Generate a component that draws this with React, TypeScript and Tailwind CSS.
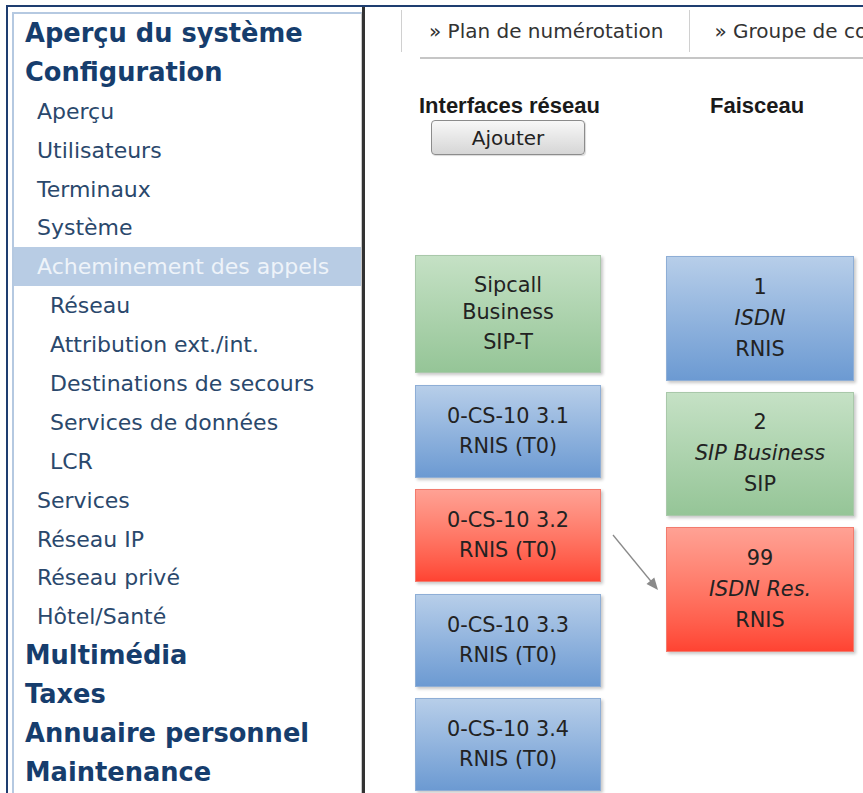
import React from 'react';

type NavItem = { label: string; level: 0 | 1 | 2; active?: boolean };

const navItems: NavItem[] = [
  { label: 'Aperçu du système', level: 0 },
  { label: 'Configuration', level: 0 },
  { label: 'Aperçu', level: 1 },
  { label: 'Utilisateurs', level: 1 },
  { label: 'Terminaux', level: 1 },
  { label: 'Système', level: 1 },
  { label: 'Acheminement des appels', level: 1, active: true },
  { label: 'Réseau', level: 2 },
  { label: 'Attribution ext./int.', level: 2 },
  { label: 'Destinations de secours', level: 2 },
  { label: 'Services de données', level: 2 },
  { label: 'LCR', level: 2 },
  { label: 'Services', level: 1 },
  { label: 'Réseau IP', level: 1 },
  { label: 'Réseau privé', level: 1 },
  { label: 'Hôtel/Santé', level: 1 },
  { label: 'Multimédia', level: 0 },
  { label: 'Taxes', level: 0 },
  { label: 'Annuaire personnel', level: 0 },
  { label: 'Maintenance', level: 0 },
];

type Tone = 'green' | 'blue' | 'red';

const toneClass: Record<Tone, string> = {
  green: 'bg-linear-to-b from-[#c5e1c5] to-[#95c597] border-[#a9c8aa]',
  blue: 'bg-linear-to-b from-[#b7cee9] to-[#6c9ad2] border-[#8eaed6]',
  red: 'bg-linear-to-b from-[#ffa194] to-[#ff4332] border-[#f27b6e]',
};

const interfaces: { tone: Tone; name: string[]; type: string; tall?: boolean }[] = [
  { tone: 'green', name: ['Sipcall', 'Business'], type: 'SIP-T', tall: true },
  { tone: 'blue', name: ['0-CS-10 3.1'], type: 'RNIS (T0)' },
  { tone: 'red', name: ['0-CS-10 3.2'], type: 'RNIS (T0)' },
  { tone: 'blue', name: ['0-CS-10 3.3'], type: 'RNIS (T0)' },
  { tone: 'blue', name: ['0-CS-10 3.4'], type: 'RNIS (T0)' },
];

const trunks: { tone: Tone; id: string; name: string; type: string }[] = [
  { tone: 'blue', id: '1', name: 'ISDN', type: 'RNIS' },
  { tone: 'green', id: '2', name: 'SIP Business', type: 'SIP' },
  { tone: 'red', id: '99', name: 'ISDN Res.', type: 'RNIS' },
];

const Sidebar: React.FC = () => (
  <div className="w-[359px] shrink-0 border-l-2 border-l-[#1e3d70] border-r-[3px] border-r-[#333333] pl-[4px] pt-[5px]">
    <div className="h-full border-l-2 border-t-2 border-r border-l-[#b5c9e1] border-t-[#b5c9e1] border-r-[#c9c9c9]">
      {navItems.map(item => {
        if (item.level === 0) {
          return (
            <div key={item.label} className="h-[38.9px] pl-[11px] flex items-center text-[25.7px] font-bold text-[#163d6d] whitespace-nowrap">
              {item.label}
            </div>
          );
        }
        return (
          <div
            key={item.label}
            className={`h-[38.9px] flex items-center text-[22px] whitespace-nowrap ${item.level === 2 ? 'pl-[36px]' : 'pl-[23px]'} ${item.active ? 'bg-[#b8cce4] text-[#eef3f9]' : 'text-[#2a486c]'}`}
          >
            {item.label}
          </div>
        );
      })}
    </div>
  </div>
);

const Box: React.FC<{ tone: Tone; className: string; children: React.ReactNode }> = ({ tone, className, children }) => (
  <div className={`border flex flex-col items-center justify-center text-[20.8px] text-[#222] whitespace-nowrap shadow-[2px_2px_3px_rgba(0,0,0,0.22)] ${toneClass[tone]} ${className}`}>
    {children}
  </div>
);

export default function App() {
  return (
    <div className="w-[863px] h-[793px] overflow-hidden bg-white pt-[5px] font-['DejaVu_Sans',Verdana,sans-serif]">
      <div className="ml-[6px] h-full border-t-2 border-[#1e3d70] flex">
        <Sidebar />

        <div className="relative flex-1 overflow-hidden">
          {/* tabs */}
          <div className="ml-[36px] mt-[3px] flex h-[42px] whitespace-nowrap text-[20px] text-[#333]">
            <div className="border-l border-[#d0d0d0] pl-[27px] pr-[26px] flex items-center">» Plan de numérotation</div>
            <div className="border-l border-[#d0d0d0] pl-[24px] flex items-center">» Groupe de communication</div>
          </div>
          <div className="ml-[55px] mt-[5px] border-t-2 border-[#c6c6c6]" />

          <div className="ml-[50px] mt-[35px] flex">
            <div className="w-[186px] shrink-0">
              <div className="h-[24px] leading-[24px] pl-[4px] text-[22px] font-bold text-[#1a1a1a] font-['Liberation_Sans',Arial,sans-serif] whitespace-nowrap">
                Interfaces réseau
              </div>
              <button className="ml-[16px] mt-[2px] w-[154px] h-[35px] rounded-[4px] border border-[#8c8c8c] bg-linear-to-b from-[#f8f8f8] to-[#d6d6d6] text-[20px] text-[#222] shadow-[1px_1px_1px_rgba(0,0,0,0.15)]">
                Ajouter
              </button>
              <div className="mt-[100px] flex flex-col gap-[11.5px]">
                {interfaces.map(i => (
                  <Box key={i.name.join(' ')} tone={i.tone} className={i.tall ? 'h-[118px]' : 'h-[93px]'}>
                    {i.name.map(n => (
                      <div key={n} className="leading-[27px]">{n}</div>
                    ))}
                    <div className="leading-[27px] mt-[3px]">{i.type}</div>
                  </Box>
                ))}
              </div>
            </div>

            <div className="ml-[65px] w-[188px] shrink-0">
              <div className="h-[24px] leading-[24px] pl-[44px] text-[22px] font-bold text-[#1a1a1a] font-['Liberation_Sans',Arial,sans-serif]">
                Faisceau
              </div>
              <div className="mt-[138px] flex flex-col gap-[11px]">
                {trunks.map(t => (
                  <Box key={t.id} tone={t.tone} className="h-[124.5px]">
                    <div className="leading-[31px]">{t.id}</div>
                    <div className="leading-[31px] italic">{t.name}</div>
                    <div className="leading-[31px]">{t.type}</div>
                  </Box>
                ))}
              </div>
            </div>
          </div>

          {/* connector arrow */}
          <svg className="absolute left-[240px] top-[520px]" width="60" height="75" viewBox="0 0 60 75">
            <line x1="8" y1="8" x2="49" y2="58" stroke="#8a8a8a" strokeWidth="1.3" />
            <polygon points="53,63 41.5,56.9 49.3,50.5" fill="#8a8a8a" />
          </svg>
        </div>
      </div>
    </div>
  );
}
